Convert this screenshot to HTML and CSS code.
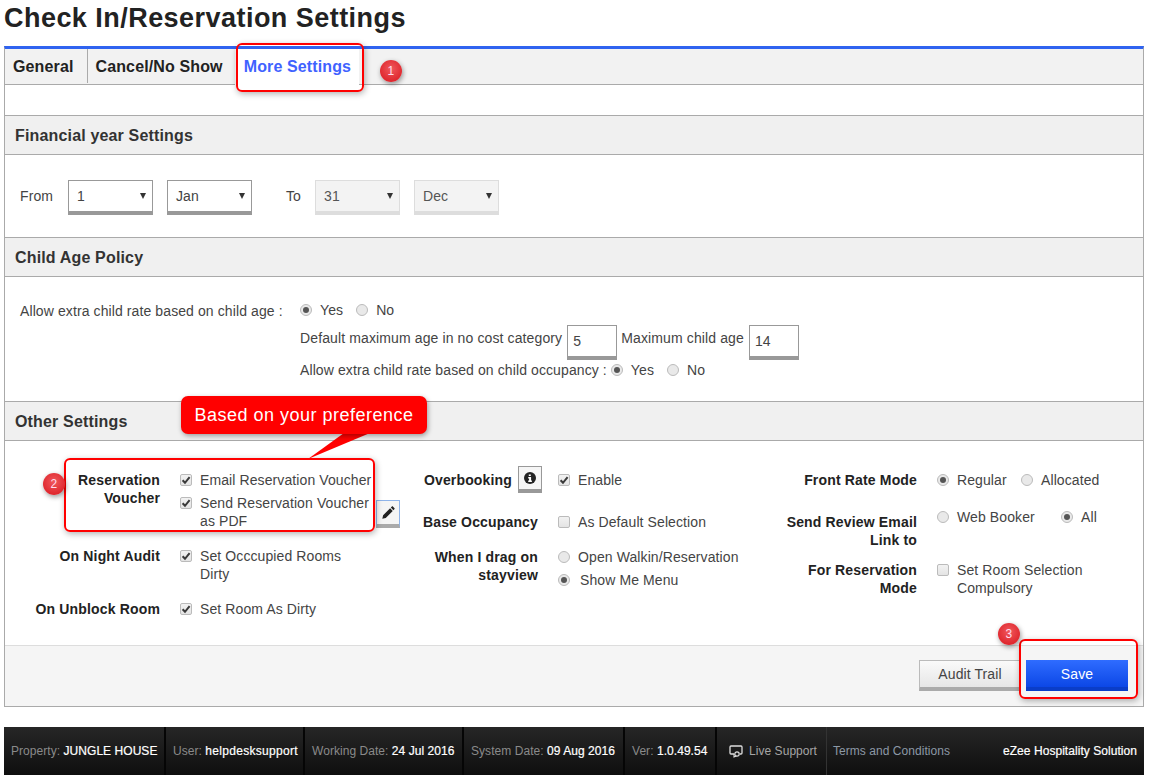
FILE: index.html
```html
<!DOCTYPE html>
<html lang="en">
<head>
<meta charset="utf-8">
<title>Check In/Reservation Settings</title>
<link rel="stylesheet" href="styles.css">
</head>
<body>
<div class="page">
  <h1 class="title">Check In/Reservation Settings</h1>
  <main class="panel">
    <nav class="tabs">
      <a class="tab tab-general">General</a>
      <a class="tab">Cancel/No Show</a>
      <a class="tab tab-active">More Settings</a>
    </nav>
    <div class="spacer"></div>

    <h2 class="section-head">Financial year Settings</h2>
    <section class="financial">
      <span class="from-label">From</span>
      <div class="select"><span>1</span><i class="caret"></i></div>
      <div class="select"><span>Jan</span><i class="caret"></i></div>
      <span class="to-label">To</span>
      <div class="select select-off"><span>31</span><i class="caret"></i></div>
      <div class="select select-off"><span>Dec</span><i class="caret"></i></div>
    </section>

    <h2 class="section-head">Child Age Policy</h2>
    <section class="child">
      <div class="child-label">Allow extra child rate based on child age :</div>
      <div class="child-rows">
        <div class="child-row child-row-a">
          <span class="radio on"></span><span class="opt-gap-a">Yes</span>
          <span class="radio"></span><span class="opt-gap-a">No</span>
        </div>
        <div class="child-row child-row-b">
          <span class="num-label">Default maximum age in no cost category</span>
          <div class="num"><span>5</span></div>
          <span class="num-label">Maximum child age</span>
          <div class="num"><span>14</span></div>
        </div>
        <div class="child-row child-row-c">
          <span class="occ-label">Allow extra child rate based on child occupancy :</span>
          <span class="radio on"></span><span class="opt-gap-a">Yes</span>
          <span class="radio"></span><span class="opt-gap-a">No</span>
        </div>
      </div>
    </section>

    <h2 class="section-head">Other Settings</h2>
    <section class="other">
      <div class="col col-1">
        <div class="lbl">Reservation<br>Voucher</div>
        <div class="val val-pencil">
          <div class="opts">
            <label class="opt"><span class="check on"><svg viewBox="0 0 12 12"><path d="M2.6 6.2 5 8.8 9.6 3.2" /></svg></span><span>Email Reservation Voucher</span></label>
            <label class="opt"><span class="check on"><svg viewBox="0 0 12 12"><path d="M2.6 6.2 5 8.8 9.6 3.2" /></svg></span><span>Send Reservation Voucher<br>as PDF</span></label>
          </div>
          <button class="icon-btn pencil-btn" aria-label="Edit"><svg viewBox="0 0 16 16" width="14" height="14"><path d="M1.5 14.5 2.4 10.6 10.4 2.6 13.4 5.6 5.4 13.6Z M11.2 1.8 12.2 0.8C12.7.3 13.3.3 13.8.8L15.2 2.2C15.7 2.7 15.7 3.3 15.2 3.8L14.2 4.8Z" fill="#222"/></svg></button>
        </div>
        <div class="lbl">On Night Audit</div>
        <div class="val">
          <label class="opt"><span class="check on"><svg viewBox="0 0 12 12"><path d="M2.6 6.2 5 8.8 9.6 3.2" /></svg></span><span>Set Occcupied Rooms<br>Dirty</span></label>
        </div>
        <div class="lbl">On Unblock Room</div>
        <div class="val">
          <label class="opt"><span class="check on"><svg viewBox="0 0 12 12"><path d="M2.6 6.2 5 8.8 9.6 3.2" /></svg></span><span>Set Room As Dirty</span></label>
        </div>
      </div>

      <div class="col col-2">
        <div class="lbl lbl-info"><span>Overbooking</span><button class="icon-btn info-btn" aria-label="Info"><svg viewBox="0 0 12 12" width="12" height="12"><circle cx="6" cy="6" r="6" fill="#222"/><path d="M4.8 2.4h2v1.6h-2z M4.2 5h2.9v3.6h.8V10H4.2V8.6h.9V6.4h-.9z" fill="#fff"/></svg></button></div>
        <div class="val">
          <label class="opt"><span class="check on"><svg viewBox="0 0 12 12"><path d="M2.6 6.2 5 8.8 9.6 3.2" /></svg></span><span>Enable</span></label>
        </div>
        <div class="lbl">Base Occupancy</div>
        <div class="val">
          <label class="opt"><span class="check"></span><span>As Default Selection</span></label>
        </div>
        <div class="lbl">When I drag on<br>stayview</div>
        <div class="val opts">
          <label class="opt"><span class="radio"></span><span>Open Walkin/Reservation</span></label>
          <label class="opt opt-menu"><span class="radio on"></span><span>Show Me Menu</span></label>
        </div>
      </div>

      <div class="col col-3">
        <div class="lbl">Front Rate Mode</div>
        <div class="val val-inline">
          <label class="opt opt-regular"><span class="radio on"></span><span>Regular</span></label>
          <label class="opt"><span class="radio"></span><span>Allocated</span></label>
        </div>
        <div class="lbl">Send Review Email<br>Link to</div>
        <div class="val val-inline val-up">
          <label class="opt opt-web"><span class="radio"></span><span>Web Booker</span></label>
          <label class="opt"><span class="radio on"></span><span>All</span></label>
        </div>
        <div class="lbl">For Reservation<br>Mode</div>
        <div class="val">
          <label class="opt"><span class="check"></span><span>Set Room Selection<br>Compulsory</span></label>
        </div>
      </div>
    </section>

    <footer class="actions">
      <button class="btn btn-audit">Audit Trail</button>
      <button class="btn btn-save">Save</button>
    </footer>
  </main>

  <footer class="status">
    <div class="cell cell-1"><span><span class="k">Property:</span> <b>JUNGLE HOUSE</b></span></div>
    <div class="cell cell-2"><span><span class="k">User:</span> <b>helpdesksupport</b></span></div>
    <div class="cell cell-3"><span><span class="k">Working Date:</span> <b>24 Jul 2016</b></span></div>
    <div class="cell cell-4"><span><span class="k">System Date:</span> <b>09 Aug 2016</b></span></div>
    <div class="cell cell-5"><span><span class="k">Ver:</span> <b>1.0.49.54</b></span></div>
    <div class="cell cell-6"><svg class="chat" viewBox="0 0 14 13" width="14" height="13"><path d="M2 1h10a1 1 0 0 1 1 1v6a1 1 0 0 1-1 1h-1M5 9H2a1 1 0 0 1-1-1V2a1 1 0 0 1 1-1" fill="none" stroke="#ddd" stroke-width="1.3"/><circle cx="8" cy="9" r="2.2" fill="none" stroke="#ddd" stroke-width="1.2"/><path d="M5 9 5 12 7.5 11" fill="none" stroke="#ddd" stroke-width="1.1"/></svg><span class="live">Live Support</span></div>
    <div class="cell cell-7"><a class="terms">Terms and Conditions</a></div>
    <div class="brand">eZee Hospitality Solution</div>
  </footer>

  <!-- Annotations drawn over the screenshot -->
  <div class="mark mark-tab"></div>
  <div class="mark mark-voucher"></div>
  <div class="mark mark-save"></div>
  <span class="badge badge-1">1</span>
  <span class="badge badge-2">2</span>
  <span class="badge badge-3">3</span>
  <svg class="tail" viewBox="0 0 70 30" width="70" height="30"><polygon points="36,0 62,0 0,26" fill="#f00"/></svg>
  <div class="callout">Based on your preference</div>
</div>
</body>
</html>
```

FILE: styles.css
```css
* { box-sizing: border-box; }
html, body { margin: 0; padding: 0; background: #fff; }
body { font-family: "Liberation Sans", Arial, sans-serif; font-size: 14px; color: #444; letter-spacing: 0.1px; }
.page { position: relative; width: 1149px; height: 779px; overflow: hidden; padding: 0 5px 0 4px; }

.title { margin: 0; height: 46px; padding-top: 2px; font-size: 27px; line-height: 32px; font-weight: 700; color: #222; letter-spacing: 0.46px; }

.panel { border: 1px solid #aaa; border-top: 3px solid #2f63f0; height: 661px; background: #fff; }

.tabs { display: flex; height: 36px; background: #f2f2f2; border-bottom: 1px solid #aaa; }
.tab { font-size: 16px; font-weight: 700; color: #222; letter-spacing: 0.13px; padding: 0 8px; line-height: 35px; }
.tab-general { border-right: 1px solid #aaa; height: 34px; line-height: 35px; padding-right: 13px; }
.tab-active { color: #3f62ff; margin-left: 4px; background: #fff; height: 37px; padding: 0 8px 0 9px; }
.spacer { height: 30px; }

.section-head { margin: 0; height: 40px; background: #f0f0f0; border-top: 1px solid #aaa; border-bottom: 1px solid #aaa; padding-left: 10px; font-size: 16px; line-height: 39px; font-weight: 700; color: #333; letter-spacing: 0.16px; }

.financial { display: flex; align-items: flex-start; height: 82px; padding: 25px 0 0 15px; }
.from-label { width: 48px; margin-top: 8px; }
.to-label { width: 29px; margin: 8px 0 0 20px; }
.select { display: flex; align-items: center; justify-content: space-between; width: 85px; height: 35px; margin-right: 14px; padding: 0 6px 0 8px; background: #fff; border: 1px solid #999; border-bottom: 4px solid #999; }
.select-off { background: #f3f3f3; border-color: #ddd; color: #555; }
.caret { width: 0; height: 0; border-left: 3px solid transparent; border-right: 3px solid transparent; border-top: 6px solid #333; }

.child { display: flex; height: 124px; padding: 24px 0 0 15px; }
.child-label { width: 280px; line-height: 20px; }
.child-rows { display: flex; flex-direction: column; }
.child-row { display: flex; align-items: center; height: 18px; }
.child-row-b { height: 35px; margin-top: 6px; gap: 5px; align-items: flex-start; }
.num-label { margin-top: 5px; letter-spacing: 0.12px; }
.child-row-c { height: 20px; }
.occ-label { margin-right: 4px; }
.opt-gap-a { margin: 0 13px 0 8px; }
.num { width: 50px; height: 35px; border: 1px solid #999; border-bottom: 4px solid #999; padding: 7px 0 0 5px; line-height: 16px; background: #fff; }
.num + .num-label { margin-left: -1px; }

.other { display: grid; grid-template-columns: 375px 379px 1fr; height: 204px; padding-top: 30px; }
.col { display: grid; column-gap: 20px; align-content: start; grid-template-columns: 158px 1fr; }
.col-1 { grid-template-columns: 155px 1fr; row-gap: 17px; }
.col-2 { grid-auto-rows: min-content; }
.col-2 .lbl, .col-2 .val { margin-bottom: 24px; }
.col-2 .val:nth-child(4), .col-2 .lbl:nth-child(3) { margin-bottom: 17px; }
.col-3 .lbl, .col-3 .val { margin-bottom: 24px; }
.col-3 .lbl:nth-child(3), .col-3 .val:nth-child(4) { margin-bottom: 12px; }

.lbl { text-align: right; font-weight: 700; color: #222; line-height: 18px; letter-spacing: 0.16px; }
.lbl-info { display: flex; justify-content: flex-end; align-items: flex-start; white-space: nowrap; }
.lbl-info span { margin-right: 6px; }
.val { line-height: 18px; }
.opts { display: flex; flex-direction: column; gap: 5px; }
.opt { display: flex; align-items: flex-start; }
.opt > span:last-child { white-space: nowrap; }
.opt-menu > span:last-child { margin-left: 2px; }
.val-pencil { display: flex; }
.val-pencil .opts { width: 196px; }
.val-inline { display: flex; }
.val-up { margin-top: -5px; }
.opt-regular { width: 84px; }
.opt-web { width: 124px; }

.check, .radio { flex: none; display: inline-block; width: 12px; height: 12px; margin: 3px 8px 0 0; background: linear-gradient(#f2f2f2, #e4e4e4); border: 1px solid #bbb; position: relative; }
.check { border-radius: 2px; }
.check svg { position: absolute; left: -1px; top: -1px; width: 12px; height: 12px; fill: none; stroke: #3a3a3a; stroke-width: 2; }
.radio { border-radius: 50%; background: #e9e9e9; }
.child-row .radio { margin: 0; }
.radio.on::after { content: ""; position: absolute; left: 2px; top: 2px; width: 6px; height: 6px; border-radius: 50%; background: #555; }

.icon-btn { display: flex; align-items: center; justify-content: center; padding: 0; background: #f5f5f5; border: 1px solid #999; border-bottom: 4px solid #999; }
.pencil-btn { width: 24px; height: 28px; align-self: flex-end; margin-bottom: 2px; border: 1px solid #8fb4ea; border-bottom: 4px solid #aaa; }
.info-btn { width: 24px; height: 27px; margin: -5px -4px -4px 0; align-items: flex-start; padding-top: 5px; }

.actions { display: flex; justify-content: flex-end; gap: 5px; height: 61px; padding: 14px 15px 0 0; background: #f5f5f5; border-top: 1px solid #ddd; }
.btn { width: 102px; height: 31px; font: 14px "Liberation Sans", Arial, sans-serif; letter-spacing: 0.1px; padding: 0; }
.btn-audit { background: linear-gradient(#fafafa, #e6e6e6); border: 1px solid #bbb; border-bottom: 4px solid #aaa; color: #444; }
.btn-save { background: linear-gradient(#2f6cff, #0c47e6); border: 0; border-bottom: 4px solid #0a3dc8; color: #fff; }

.status { display: flex; align-items: center; height: 48px; margin-top: 20px; background: linear-gradient(#262626, #0e0e0e); font-size: 12px; letter-spacing: 0.05px; color: #8a8a8a; width: 1140px; }
.cell { height: 100%; display: flex; align-items: center; white-space: pre; border-right: 2px solid #050505; padding-left: 7px; }
.cell b { font-weight: 400; color: #fff; -webkit-text-stroke: 0.2px #fff; }
.cell-1 { width: 162px; }
.cell-2 { width: 139px; }
.cell-2 b { letter-spacing: 0.3px; }
.cell-3 { width: 159px; }
.cell-4 { width: 161px; }
.cell-5 { width: 92px; }
.cell-6 { width: 110px; padding-left: 12px; border-right: 1px solid #333; }
.cell-7 { border: 0; padding-left: 6px; }
.chat { margin-right: 6px; }
.live { color: #a5a5a5; }
.terms { color: #8c98a6; }
.brand { margin-left: auto; padding-right: 7px; color: #fff; -webkit-text-stroke: 0.2px #fff; }

.mark { position: absolute; border: 2px solid #f00; border-radius: 6px; box-shadow: 1px 2px 6px rgba(0,0,0,.3); }
.mark-tab { left: 236px; top: 43px; width: 128px; height: 49px; }
.mark-voucher { left: 64px; top: 458px; width: 311px; height: 74px; }
.mark-save { left: 1019px; top: 639px; width: 119px; height: 60px; }

.badge { position: absolute; width: 22px; height: 22px; border-radius: 50%; background: radial-gradient(circle at 50% 40%, #f0585c, #d8141c); color: #fde; font-size: 12px; line-height: 22px; text-align: center; box-shadow: 1px 2px 5px rgba(0,0,0,.4); }
.badge-1 { left: 380px; top: 60px; }
.badge-2 { left: 43px; top: 473px; }
.badge-3 { left: 998px; top: 623px; }

.callout { position: absolute; left: 181px; top: 396px; width: 246px; height: 38px; background: #f00; color: #fff; border-radius: 7px; font-size: 18px; letter-spacing: 0.5px; line-height: 38px; text-align: center; box-shadow: 1px 2px 5px rgba(0,0,0,.35); }
.tail { position: absolute; left: 308px; top: 433px; }
```
